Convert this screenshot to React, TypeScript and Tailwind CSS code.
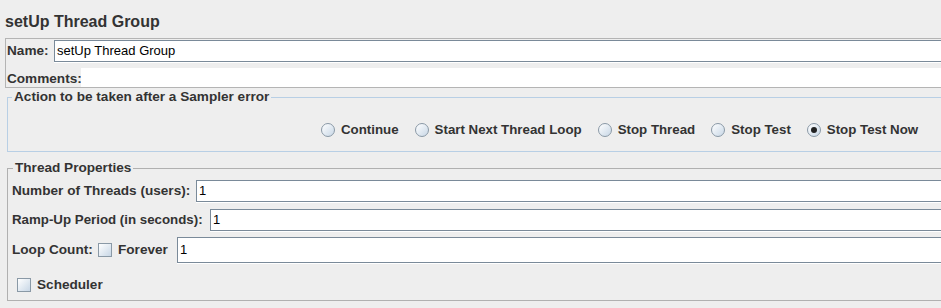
import React from "react";

const radioOptions = [
  "Continue",
  "Start Next Thread Loop",
  "Stop Thread",
  "Stop Test",
  "Stop Test Now",
];

function Radio({ checked }: { checked?: boolean }) {
  return (
    <span className="grid h-[14px] w-[14px] shrink-0 place-items-center rounded-full border border-[#8a99a6] bg-gradient-to-br from-white to-[#c8d7e6]">
      {checked && (
        <span className="h-[6px] w-[6px] rounded-full bg-[#222]" />
      )}
    </span>
  );
}

function Checkbox() {
  return (
    <span className="h-[14px] w-[14px] shrink-0 border border-[#8a99a6] bg-gradient-to-br from-white to-[#c8d7e6]" />
  );
}

function TextField({
  value,
  className = "h-[22px]",
}: {
  value?: string;
  className?: string;
}) {
  return (
    <div
      className={`flex flex-1 items-center border border-[#7a8a99] bg-white pl-[2px] font-normal text-[13px] text-black shadow-[0_1px_0_#ffffff] ${className}`}
    >
      {value}
    </div>
  );
}

export default function App() {
  return (
    <div className="h-[308px] w-[941px] overflow-hidden bg-[#eeeeee] font-['Liberation_Sans',Arial,sans-serif] text-[13.6px] font-bold text-[#333333]">
      <div className="w-[980px]">
        <h1 className="pl-[5px] pt-[13px] text-[16px] leading-[18px] font-bold">
          setUp Thread Group
        </h1>

        {/* name / comments */}
        <div className="ml-[5px] mt-[7px] border border-[#b4b4b4] leading-[16px]">
          <div className="mt-[1px] flex items-center">
            <span className="w-[48px] shrink-0 pl-[1px]">Name:</span>
            <TextField value="setUp Thread Group" />
          </div>
          <div className="flex items-end pt-[6px]">
            <span className="w-[75px] shrink-0 pl-[1px]">Comments:</span>
            <div className="h-[19px] flex-1 bg-white" />
          </div>
        </div>

        {/* sampler error action */}
        <fieldset className="ml-[7px] mt-px border border-[#b8cfe5] leading-[16px]">
          <legend className="ml-[4px] px-[2px]">
            Action to be taken after a Sampler error
          </legend>
          <div className="flex h-[46px] items-start gap-[16px] pl-[313px] pt-[17px]">
            {radioOptions.map((label) => (
              <label
                key={label}
                className="flex items-center gap-[6px]"
              >
                <Radio checked={label === "Stop Test Now"} />
                <span className="text-[13.3px]">{label}</span>
              </label>
            ))}
          </div>
        </fieldset>

        {/* thread properties */}
        <fieldset className="ml-[7px] mt-[8px] h-[141px] border border-[#b0b0b0] leading-[16px]">
          <legend className="ml-[5px] px-[2px]">Thread Properties</legend>
          <div className="flex flex-col pt-[4px]">
            <div className="flex items-center">
              <span className="w-[188px] shrink-0 pl-[4px]">
                Number of Threads (users):
              </span>
              <TextField value="1" />
            </div>

            <div className="mt-[7px] flex items-center">
              <span className="w-[202px] shrink-0 pl-[4px] text-[13.3px]">
                Ramp-Up Period (in seconds):
              </span>
              <TextField value="1" />
            </div>

            <div className="mt-[6px] flex items-center">
              <span className="w-[90px] shrink-0 pl-[4px]">Loop Count:</span>
              <Checkbox />
              <span className="w-[65px] shrink-0 pl-[6px]">Forever</span>
              <TextField value="1" className="h-[26px]" />
            </div>

            <div className="mt-[14px] flex items-center pl-[9px]">
              <Checkbox />
              <span className="pl-[6px]">Scheduler</span>
            </div>
          </div>
        </fieldset>
      </div>
    </div>
  );
}
